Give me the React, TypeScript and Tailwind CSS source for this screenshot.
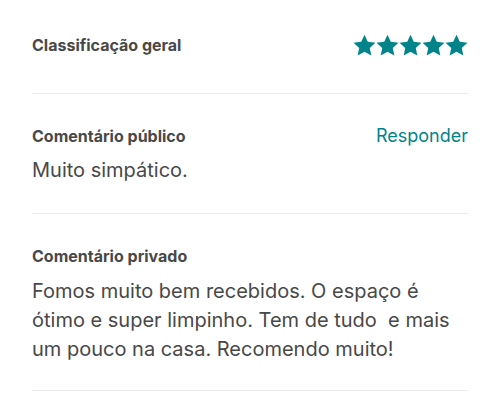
import React from "react";

const Star: React.FC = () => (
  <svg viewBox="0 0 24 24" className="w-[23px] h-[23px]" fill="#008489">
    <path d="M12 .8l3.4 7.3 8 .9-5.9 5.5 1.6 7.9L12 18.4l-7.1 4 1.6-7.9L.6 9l8-.9z" />
  </svg>
);

const App: React.FC = () => {
  return (
    <div
      className="w-[500px] h-[412px] bg-white px-[32px] text-[#484848]"
      style={{ fontFamily: "Inter, 'Noto Sans', sans-serif" }}
    >
      <div className="flex items-center justify-between pt-[34px] pb-[37px] h-[93px]">
        <h2 className="text-[16px] font-bold leading-[20px]">Classificação geral</h2>
        <div className="flex">
          <Star />
          <Star />
          <Star />
          <Star />
          <Star />
        </div>
      </div>
      <div className="border-t border-[#ebebeb]" />
      <div className="pt-[32px] pb-[29px]">
        <div className="flex items-center justify-between">
          <h2 className="text-[16px] font-bold leading-[20px]">Comentário público</h2>
          <button className="text-[18px] leading-[20px] text-[#008489]">Responder</button>
        </div>
        <p className="mt-[10px] text-[20px] leading-[28px]">Muito simpático.</p>
      </div>
      <div className="border-t border-[#ebebeb]" />
      <div className="pt-[32px] pb-[26px]">
        <h2 className="text-[16px] font-bold leading-[20px]">Comentário privado</h2>
        <p className="mt-[11px] text-[20px] leading-[29px] whitespace-pre">
          {"Fomos muito bem recebidos. O espaço é\nótimo e super limpinho. Tem de tudo  e mais\num pouco na casa. Recomendo muito!"}
        </p>
      </div>
      <div className="border-t border-[#ebebeb]" />
    </div>
  );
};

export default App;
